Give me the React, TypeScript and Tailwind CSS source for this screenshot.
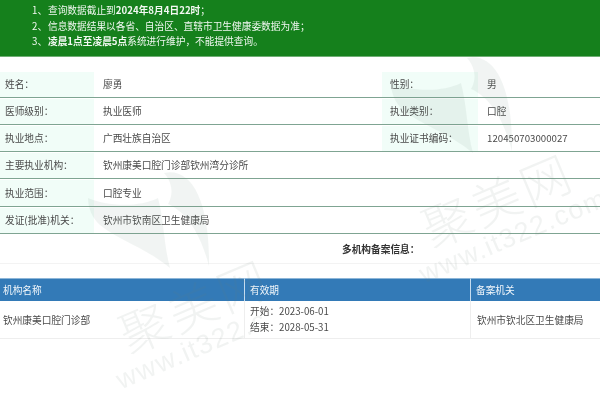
const font = { fontFamily: '"Noto Sans CJK SC", "Liberation Sans", sans-serif' };
const C = "\uFF1A";
const S = "\uFF1B";
const K = "\uFF0C";

const rows = [
  ["姓名" + C, "廖勇", "性别" + C, "男"],
  ["医师级别" + C, "执业医师", "执业类别" + C, "口腔"],
  ["执业地点" + C, "广西壮族自治区", "执业证书编码" + C, "120450703000027"],
  ["主要执业机构" + C, "钦州康美口腔门诊部钦州湾分诊所"],
  ["执业范围" + C, "口腔专业"],
  ["发证(批准)机关" + C, "钦州市钦南区卫生健康局"],
];

function Tooth({ className }: { className: string }) {
  return (
    <svg viewBox="0 0 125 105" className={className} fill="#6f8f80">
      <path d="M76 3 C104 -3 122 32 121 96 C112 62 98 42 80 34 C86 24 84 12 76 3 Z" />
      <path d="M0 28 C18 36 50 38 70 28 C76 50 76 76 82 98 C58 78 30 70 12 55 C4 48 0 38 0 28 Z" />
    </svg>
  );
}

function Mark({ className }: { className: string }) {
  return (
    <div className={`absolute w-[205px] flex flex-col items-center -rotate-[23deg] text-[#6b7f76] ${className}`}>
      <div className="text-[49px] leading-[54px] tracking-[4px] whitespace-nowrap font-light">聚美网</div>
      <div className="text-[27px] leading-[28px] tracking-[1.5px] whitespace-nowrap" style={{ fontFamily: '"Liberation Sans", sans-serif' }}>www.it322.com</div>
    </div>
  );
}

export default function App() {
  return (
    <div className="relative w-[600px] h-[410px] overflow-hidden bg-white text-[9.7px] text-[#4a4a4a] blur-[0.3px]" style={font}>
      <div className="h-[57px] bg-[#15801c] border-b border-[#6fae74] text-[#f2f8f2] pl-[32px] pt-[3px] leading-[15.6px]">
        <div><span className="inline-block w-[16px]">1、</span>查询数据截止到<span className="font-bold">2024年8月4日22时</span>{S}</div>
        <div><span className="inline-block w-[16px]">2、</span>信息数据结果以各省、自治区、直辖市卫生健康委数据为准{S}</div>
        <div><span className="inline-block w-[16px]">3、</span><span className="font-bold">凌晨1点至凌晨5点</span>系统进行维护{K}不能提供查询。</div>
      </div>

      <div className="mt-[13.6px] grid grid-cols-[94px_288px_96px_1fr]">
        {rows.map((r) => (
          <div key={r[0]} className="col-span-4 grid grid-cols-subgrid h-[27.2px] border-b-[1px] border-[#7fa492] items-stretch pt-[1px]">
            <div className="bg-[#f1fdf8] pl-[5px] flex items-center">{r[0]}</div>
            <div className="pl-[9px] flex items-center">{r[1]}</div>
            {r[2] && <div className="bg-[#f1fdf8] pl-[8px] flex items-center">{r[2]}</div>}
            {r[3] && <div className="pl-[9px] flex items-center">{r[3]}</div>}
          </div>
        ))}
      </div>

      <div className="h-[30px] border-b border-[#f3f3f3] pl-[342px] pt-[2px] flex items-center font-bold text-[#333]">多机构备案信息{C}</div>

      <div className="mt-[14px] grid grid-cols-[244px_226px_1fr]">
        <div className="h-[23px] bg-[#337ab7] border-t border-[#8db6d8] text-[#f2f7fb] pl-[3px] pt-[1px] flex items-center">机构名称</div>
        <div className="h-[23px] bg-[#337ab7] border-t border-l border-t-[#8db6d8] border-l-[#c5dcef] text-[#f2f7fb] pl-[5px] pt-[1px] flex items-center">有效期</div>
        <div className="h-[23px] bg-[#337ab7] border-t border-l border-t-[#8db6d8] border-l-[#c5dcef] text-[#f2f7fb] pl-[5px] pt-[1px] flex items-center">备案机关</div>
        <div className="h-[38px] border-b border-[#eeeeee] pl-[3px] pt-[2px] flex items-center">钦州康美口腔门诊部</div>
        <div className="h-[38px] border-b border-l border-[#eeeeee] pl-[5px] pt-[1px] flex flex-col justify-center leading-[15.5px]">
          <div>开始{C}2023-06-01</div>
          <div>结束{C}2028-05-31</div>
        </div>
        <div className="h-[38px] border-b border-l border-[#eeeeee] pl-[6px] pt-[2px] flex items-center">钦州市钦北区卫生健康局</div>
      </div>

      <div className="absolute inset-0 opacity-[0.09] pointer-events-none">
        <Tooth className="absolute left-[391px] top-[55px] w-[125px] h-[105px]" />
        <Tooth className="absolute left-[88px] top-[170px] w-[125px] h-[105px]" />
        <Mark className="left-[400px] top-[170px]" />
        <div className="absolute left-0 top-0 w-[262px] h-full overflow-hidden">
          <Mark className="left-[97px] top-[276px]" />
        </div>
      </div>
    </div>
  );
}
